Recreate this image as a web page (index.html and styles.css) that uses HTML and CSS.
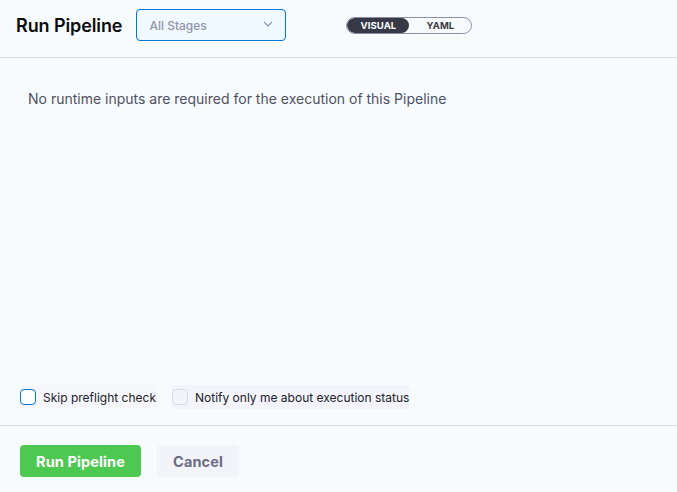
FILE: index.html
```html
<!DOCTYPE html>
<html>
<head>
<meta charset="utf-8">
<link rel="stylesheet" href="styles.css">
</head>
<body>
<div class="dialog">
  <header class="header">
    <h1 class="title">Run Pipeline</h1>
    <div class="select">
      <span class="select-text">All Stages</span>
      <svg class="chev" width="10" height="6" viewBox="0 0 10 6"><path d="M1 1l4 4 4-4" fill="none" stroke="#9293ab" stroke-width="1.2"/></svg>
    </div>
    <div class="toggle">
      <span class="seg active">VISUAL</span>
      <span class="seg">YAML</span>
    </div>
  </header>
  <main class="content">
    <p class="msg">No runtime inputs are required for the execution of this Pipeline</p>
  </main>
  <div class="options">
    <label class="opt"><span class="box blue"></span><span>Skip preflight check</span></label>
    <label class="opt"><span class="box"></span><span>Notify only me about execution status</span></label>
  </div>
  <footer class="footer">
    <button class="btn primary">Run Pipeline</button>
    <button class="btn secondary">Cancel</button>
  </footer>
</div>
</body>
</html>
```
FILE: styles.css
```css
* { box-sizing: border-box; }
html, body { margin: 0; padding: 0; }
body {
  width: 677px; height: 492px;
  background: #f8fbfe;
  font-family: Inter, "Noto Sans", sans-serif;
  overflow: hidden;
}
.dialog { display: flex; flex-direction: column; height: 492px; }
.header {
  height: 58px;
  display: flex; align-items: center;
  padding: 0 0 0 16px;
  border-bottom: 1px solid #d9dae5;
  flex-shrink: 0;
}
.title {
  margin: 0;
  font-size: 18px; font-weight: 600; color: #0b0b0d;
  letter-spacing: -0.1px;
  margin-top: -7px;
}
.select {
  margin-left: 14px;
  margin-top: -7px;
  width: 150px; height: 32px;
  border: 1px solid #0278d5;
  border-radius: 4px;
  background: #f0f9ff;
  display: flex; align-items: center; justify-content: space-between;
  padding: 0 12px 0 12px;
}
.select-text { font-size: 12px; color: #9293ab; font-weight: 500; }
.chev { margin-top: -2px; }
.toggle {
  margin-left: 60px;
  margin-top: -7px;
  width: 126px; height: 17px;
  border: 1px solid #8c8da6;
  border-radius: 9px;
  display: flex;
  overflow: hidden;
}
.seg {
  flex: 1;
  display: flex; align-items: center; justify-content: center;
  font-size: 9.5px; font-weight: 700; color: #383946;
  letter-spacing: 0.1px;
}
.seg.active { background: #383946; color: #fff; border-radius: 9px; }
.content { flex: 1; padding: 0 28px; }
.msg {
  margin: 32px 0 0;
  font-size: 14px; color: #4f5162;
}
.options {
  display: flex; gap: 16px;
  padding: 0 20px 16px;
}
.opt {
  display: flex; align-items: center; gap: 7px;
  height: 24px;
  background: #f3f3fa;
  border-radius: 4px;
  font-size: 12px; color: #22222a;
}
.opt:first-child { background: #f5f6fa; }
.box {
  width: 16px; height: 16px;
  border: 1px solid #d9dae5;
  border-radius: 4px;
  background: #f3f3fa;
}
.box.blue { border-color: #0278d5; background: #fff; }
.footer {
  height: 67px;
  flex-shrink: 0;
  border-top: 1px solid #d9dae5;
  display: flex; align-items: center; gap: 16px;
  padding: 4px 20px 0;
}
.btn {
  height: 32px;
  border: none; border-radius: 4px;
  font-family: inherit;
  font-size: 14.5px; font-weight: 700;
  letter-spacing: 0.1px;
  padding: 0;
}
.primary { background: #4dc952; color: #fff; width: 121px; }
.secondary { background: #f3f3fa; color: #6b6d85; width: 82px; }
```
